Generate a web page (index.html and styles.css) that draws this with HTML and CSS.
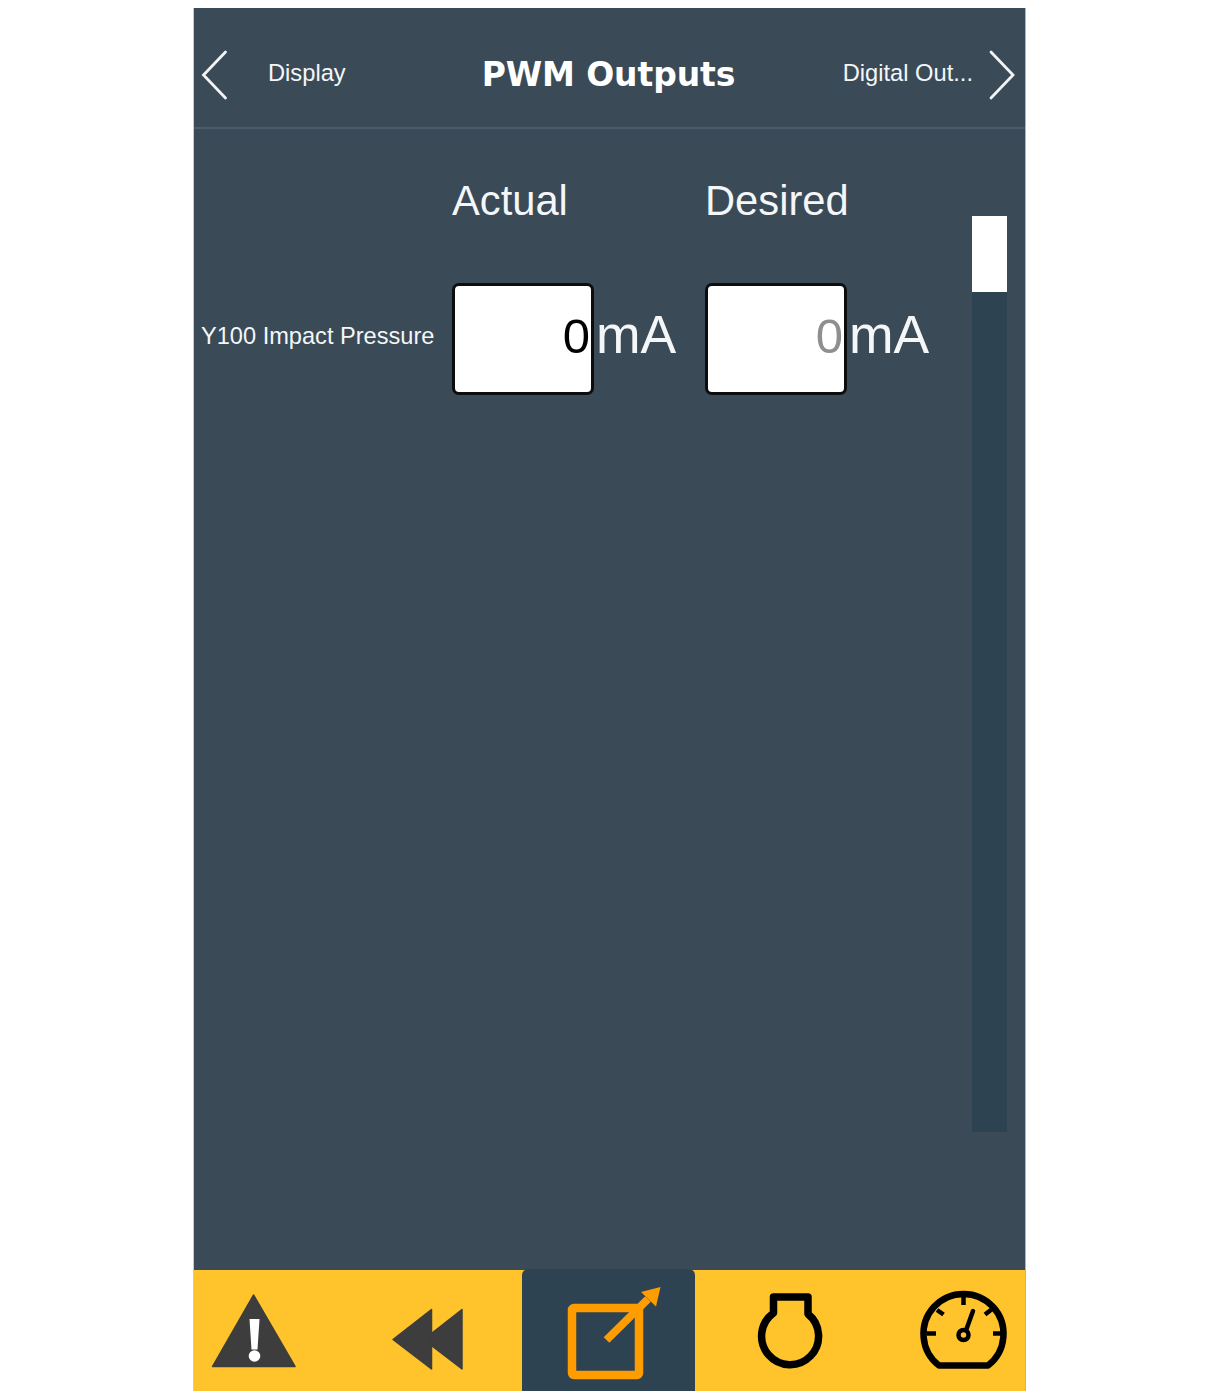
FILE: index.html
```html
<!DOCTYPE html>
<html lang="en">
<head>
<meta charset="utf-8">
<title>PWM Outputs</title>
<link rel="stylesheet" href="styles.css">
</head>
<body>
<div class="panel">
  <header class="header">
    <div class="nav nav-left">
      <svg class="chev" viewBox="0 0 30 60"><path d="M24.5 7 L2.5 30 L24.5 53"/></svg>
      <span class="nav-label nav-label-left">Display</span>
    </div>
    <h1 class="title">PWM Outputs</h1>
    <div class="nav nav-right">
      <span class="nav-label">Digital Out...</span>
      <svg class="chev" viewBox="0 0 30 60"><path d="M6 7 L28 30 L6 53"/></svg>
    </div>
  </header>
  <main class="main">
    <div class="content">
      <div class="grid">
        <div></div>
        <div class="col-head">Actual</div>
        <div class="col-head">Desired</div>
        <div class="row-label">Y100 Impact Pressure</div>
        <div class="field"><div class="box">0</div><span class="unit">mA</span></div>
        <div class="field"><div class="box box-muted">0</div><span class="unit">mA</span></div>
      </div>
    </div>
    <div class="scroll"><div class="thumb"></div></div>
  </main>
  <footer class="footer">
    <div class="tab tab-1">
      <svg class="icon" width="120" height="121" viewBox="194 1270 120 121">
        <path class="dark" d="M253.5 1295 L295 1366.5 L212.5 1366.5 Z"/>
        <path class="light" d="M249.5 1319 H259.5 L257.5 1349.5 H251.5 Z"/>
        <circle class="light" cx="254.5" cy="1356" r="5.8"/>
      </svg>
    </div>
    <div class="tab tab-2">
      <svg class="icon" width="188" height="121" viewBox="334 1270 188 121">
        <path class="dark" d="M431.5 1309.5 V1369 L393 1339.5 Z"/>
        <path class="dark" d="M462 1309.5 V1369 L432 1346 V1333 Z"/>
      </svg>
    </div>
    <div class="tab tab-active">
      <svg class="icon" width="173" height="122" viewBox="522 1269 173 122">
        <rect class="orange-line" x="572" y="1308" width="67" height="67" rx="2"/>
        <path class="orange-shaft" d="M606.5 1340 L648 1299"/>
        <path class="orange-fill" d="M660.5 1287 L656 1306.5 L641 1292 Z"/>
      </svg>
    </div>
    <div class="tab tab-4">
      <svg class="icon" width="190" height="121" viewBox="695 1270 190 121">
        <path class="black-line" d="M773.5 1313 V1297 H808 V1314 A28.5 28.5 0 1 1 773.5 1313 Z"/>
      </svg>
    </div>
    <div class="tab tab-5">
      <svg class="icon" width="122" height="121" viewBox="903 1270 122 121">
        <path class="gauge-line" d="M941 1365.5 H986 L988 1365.5 A40 40 0 1 0 939 1365.5 Z"/>
        <path class="gauge-tick" d="M963.5 1297 V1305 M927 1333.5 H936 M993 1333.5 H1004 M937 1310 L943.5 1314.5 M985 1314.5 L991.5 1309.5"/>
        <circle class="gauge-hub" cx="963.5" cy="1335" r="5"/>
        <path class="gauge-needle" d="M966.5 1329 L973 1311"/>
      </svg>
    </div>
  </footer>
</div>
</body>
</html>
```

FILE: styles.css
```css
* { box-sizing: border-box; }

html, body { margin: 0; padding: 0; background: #fff; }

body {
  display: flex;
  justify-content: center;
  padding-top: 8px;
  font-family: "Liberation Sans", Arial, sans-serif;
  color: #f4f6f7;
}

.panel {
  width: 831px;
  height: 1383px;
  background: #3a4a57;
  display: flex;
  flex-direction: column;
  box-shadow: 1px 0 0 #a9b6c2, -1px 0 0 #c4ccd3;
}

.header {
  flex: none;
  height: 121px;
  padding-top: 14px;
  display: grid;
  grid-template-columns: 1fr auto 1fr;
  align-items: center;
  border-bottom: 2px solid #4a5c6c;
}

.nav { display: flex; align-items: center; }
.nav-left { padding-left: 7px; }
.nav-right { justify-content: flex-end; padding-right: 10px; }

.chev {
  display: block;
  width: 30px;
  height: 60px;
  fill: none;
  stroke: #f2f4f5;
  stroke-width: 2.8;
  stroke-linecap: round;
  stroke-linejoin: miter;
}

.nav-label { font-size: 23.7px; line-height: 28px; margin-top: -3px; }
.nav-label-left { margin-left: 37px; }
.nav-right .nav-label { margin-right: 12px; }

.title {
  margin: 0 2px 0 0;
  font-family: "DejaVu Sans", Verdana, sans-serif;
  font-size: 33px;
  font-weight: 700;
  letter-spacing: -0.1px;
  line-height: 40px;
  color: #fff;
}

.main { flex: 1; min-height: 0; display: flex; }
.content { flex: 1; padding: 46px 0 0 7px; }

.grid {
  display: grid;
  grid-template-columns: 251px 253px 1fr;
  grid-template-rows: 52px 112px;
  row-gap: 56px;
  align-items: center;
}

.col-head { font-size: 41.7px; line-height: 52px; }

.row-label { font-size: 23.6px; line-height: 30px; margin-top: -7px; }

.field { display: flex; align-items: flex-start; }

.box {
  width: 142px;
  height: 112px;
  background: #fff;
  border: 3px solid #0d0d0d;
  border-radius: 7px;
  color: #000;
  font-size: 49px;
  line-height: 100px;
  text-align: right;
  padding-right: 1px;
}

.box-muted { color: #8f8f8f; }

.unit { font-size: 53.5px; line-height: 104px; margin-left: 2px; }

.scroll {
  flex: none;
  width: 35px;
  height: 916px;
  margin: 87px 18px 0 0;
  background: #2e4352;
}

.thumb { height: 76px; background: #fff; }

.footer { flex: none; height: 121px; background: #ffc42b; display: flex; }

.tab { flex: none; height: 121px; }
.icon { display: block; }
.tab-1 { width: 120px; }
.tab-2 { width: 188px; margin-left: 20px; }
.tab-active {
  width: 173px;
  height: 122px;
  margin-top: -1px;
  background: #2e4352;
  border-radius: 6px 6px 0 0;
}
.tab-4 { width: 190px; }
.tab-5 { width: 122px; margin-left: 18px; }

.dark { fill: #3d3d3d; stroke: #3d3d3d; stroke-width: 1.5; stroke-linejoin: round; }
.light { fill: #fff; }
.orange-line { fill: none; stroke: #ff9c00; stroke-width: 8.5; }
.orange-shaft { fill: none; stroke: #ff9c00; stroke-width: 8; }
.orange-fill { fill: #ff9c00; }
.black-line { fill: none; stroke: #000; stroke-width: 7.5; stroke-linejoin: round; }
.gauge-line { fill: none; stroke: #000; stroke-width: 6.5; stroke-linejoin: round; }
.gauge-tick { fill: none; stroke: #000; stroke-width: 4.5; }
.gauge-hub { fill: none; stroke: #000; stroke-width: 4.5; }
.gauge-needle { fill: none; stroke: #000; stroke-width: 4.5; stroke-linecap: round; }
```
